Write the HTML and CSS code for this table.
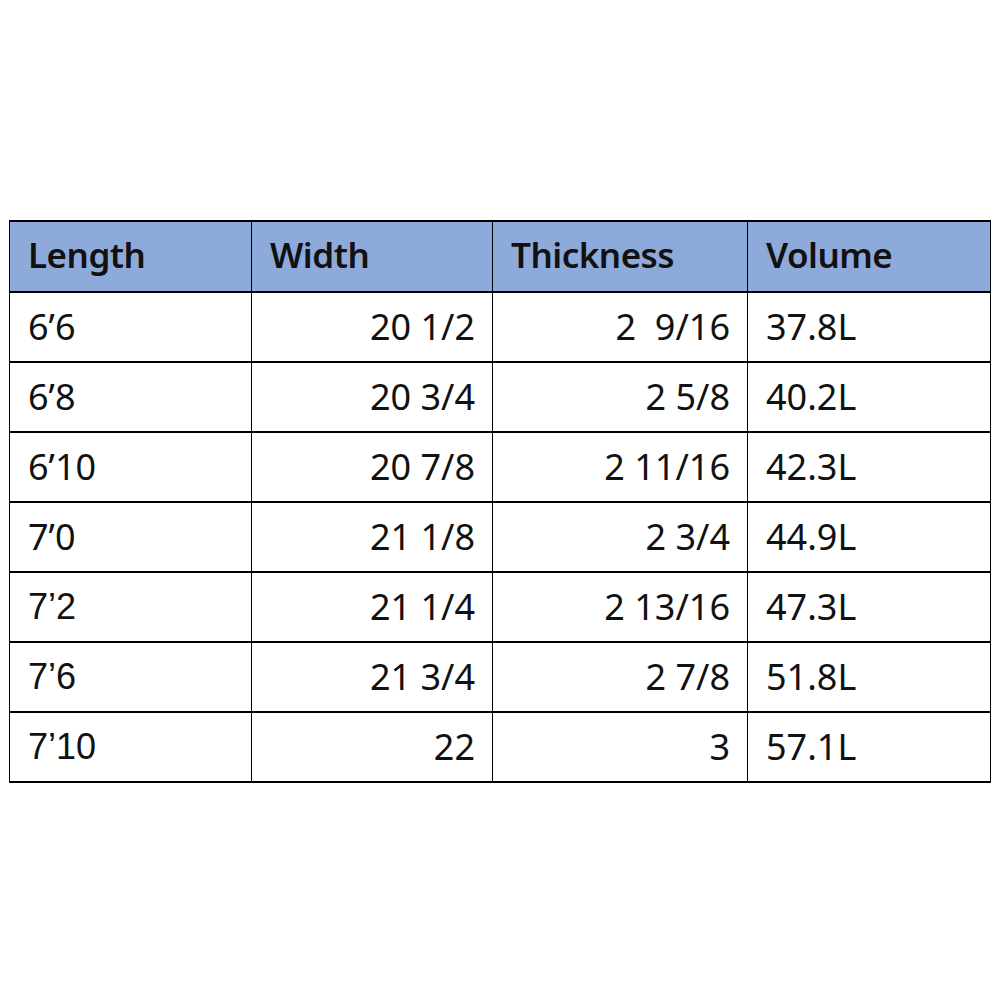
FILE: index.html
```html
<!DOCTYPE html>
<html>
<head>
<meta charset="utf-8">
<link rel="stylesheet" href="styles.css">
</head>
<body>
<div class="page">
<table class="sizes">
  <colgroup>
    <col class="c1"><col class="c2"><col class="c3"><col class="c4">
  </colgroup>
  <thead>
    <tr><th>Length</th><th>Width</th><th>Thickness</th><th>Volume</th></tr>
  </thead>
  <tbody>
    <tr><td>6’6</td><td class="r">20 1/2</td><td class="r pre">2  9/16</td><td>37.8L</td></tr>
    <tr><td>6’8</td><td class="r">20 3/4</td><td class="r">2 5/8</td><td>40.2L</td></tr>
    <tr><td>6’10</td><td class="r">20 7/8</td><td class="r">2 11/16</td><td>42.3L</td></tr>
    <tr><td>7’0</td><td class="r">21 1/8</td><td class="r">2 3/4</td><td>44.9L</td></tr>
    <tr><td class="alt">7’2</td><td class="r">21 1/4</td><td class="r">2 13/16</td><td>47.3L</td></tr>
    <tr><td class="alt">7’6</td><td class="r">21 3/4</td><td class="r">2 7/8</td><td>51.8L</td></tr>
    <tr><td class="alt">7’10</td><td class="r">22</td><td class="r">3</td><td>57.1L</td></tr>
  </tbody>
</table>
</div>
</body>
</html>
```

FILE: styles.css
```css
html, body {
  margin: 0;
  padding: 0;
  background: #ffffff;
}
.page {
  padding: 220px 0 0 9px;
}
.sizes {
  border-collapse: collapse;
  table-layout: fixed;
  width: 981px;
  font-family: "Noto Sans", "Open Sans", sans-serif;
  font-size: 36px;
  color: #111111;
}
.c1 { width: 242px; }
.c2 { width: 241px; }
.c3 { width: 255px; }
.c4 { width: 243px; }
.sizes th, .sizes td {
  border-left: 1px solid #000;
  border-right: 1px solid #000;
  border-top: 2px solid #000;
  border-bottom: 2px solid #000;
  padding: 0 17px 0 18px;
  text-align: left;
  vertical-align: middle;
  white-space: nowrap;
  line-height: 1;
}
.sizes th {
  background: #8eaadb;
  font-weight: 600;
  font-size: 35px;
  letter-spacing: -0.5px;
  height: 65px;
  padding-bottom: 4px;
}
.sizes td {
  height: 68px;
  font-weight: 400;
}
.sizes td.r {
  text-align: right;
}
.sizes td.pre {
  white-space: pre;
}
.sizes td.alt {
  font-family: "Liberation Sans", Arial, sans-serif;
}
```
